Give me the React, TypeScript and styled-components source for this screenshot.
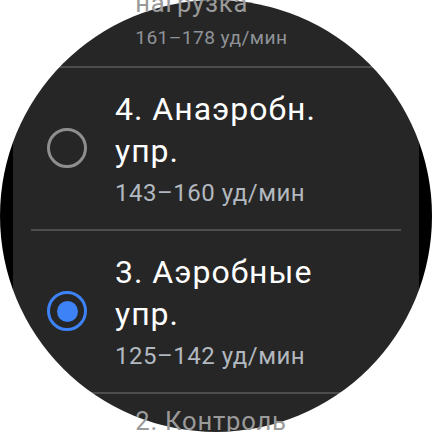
import * as React from 'react';
import styled, { createGlobalStyle } from 'styled-components';

interface Zone {
    id: number;
    title: string;
    range: string;
}

type Edge = 'top' | 'bottom' | undefined;

const GlobalStyle = createGlobalStyle`
    html, body {
        margin: 0;
        padding: 0;
        background: #ffffff;
        overflow: hidden;
    }
    body {
        font-family: Roboto, "Noto Sans", sans-serif;
    }
`;

const Screen = styled.div`
    width: 432px;
    height: 432px;
    border-radius: 50%;
    background: linear-gradient(to right, #000 13px, #262626 13px, #262626 419px, #000 419px);
    display: flex;
    flex-direction: column;
`;

const List = styled.div`
    margin-top: -95px;
    padding: 0 31px;
    display: flex;
    flex-direction: column;
`;

const Divider = styled.div`
    height: 2px;
    background: rgba(255, 255, 255, 0.18);
`;

const Item = styled.div<{ $edge: Edge }>`
    display: flex;
    align-items: center;
    gap: 28px;
    padding: 20px 30px 21px 16px;
    transform: ${(p) => (p.$edge ? 'scale(0.8)' : 'none')};
    transform-origin: ${(p) => (p.$edge === 'top' ? '50% 100%' : '50% -28px')};
`;

const Radio = styled.div<{ $checked: boolean; $faded: boolean }>`
    flex: none;
    width: 40px;
    height: 40px;
    box-sizing: border-box;
    border-radius: 50%;
    border: ${(p) => (p.$checked ? '3.5px solid #3d82f7' : '3px solid #8e8e8e')};
    display: flex;
    align-items: center;
    justify-content: center;
    opacity: ${(p) => (p.$faded ? 0 : 1)};

    &::after {
        content: '';
        display: ${(p) => (p.$checked ? 'block' : 'none')};
        width: 21px;
        height: 21px;
        border-radius: 50%;
        background: #3d82f7;
    }
`;

const Text = styled.div`
    display: flex;
    flex-direction: column;
    gap: 6px;
    min-width: 0;
`;

const Title = styled.div<{ $dim: boolean }>`
    font-size: 32px;
    line-height: 42px;
    letter-spacing: 1px;
    color: ${(p) => (p.$dim ? '#9a9a9a' : '#ffffff')};
`;

const Range = styled.div<{ $dim: boolean }>`
    font-size: 24px;
    line-height: 30px;
    letter-spacing: 0.5px;
    color: ${(p) => (p.$dim ? '#8f9398' : '#b2b8bf')};
`;

const zones: Zone[] = [
    { id: 5, title: '5. Макс. нагрузка', range: '161–178 уд/мин' },
    { id: 4, title: '4. Анаэробн. упр.', range: '143–160 уд/мин' },
    { id: 3, title: '3. Аэробные упр.', range: '125–142 уд/мин' },
    { id: 2, title: '2. Контроль веса', range: '107–124 уд/мин' },
];

const App: React.FunctionComponent = () => {
    const [selected, setSelected] = React.useState<number>(3);

    const edgeOf = (index: number): Edge => {
        if (index === 0) return 'top';
        if (index === zones.length - 1) return 'bottom';
        return undefined;
    };

    return (
        <>
            <GlobalStyle />
            <Screen>
                <List>
                    {zones.map((zone, i) => {
                        const edge = edgeOf(i);
                        return (
                            <React.Fragment key={zone.id}>
                                {i > 0 && <Divider />}
                                <Item $edge={edge} onClick={() => setSelected(zone.id)}>
                                    <Radio $checked={selected === zone.id} $faded={edge === 'top'} />
                                    <Text>
                                        <Title $dim={!!edge}>{zone.title}</Title>
                                        <Range $dim={!!edge}>{zone.range}</Range>
                                    </Text>
                                </Item>
                            </React.Fragment>
                        );
                    })}
                </List>
            </Screen>
        </>
    );
};

export default App;
